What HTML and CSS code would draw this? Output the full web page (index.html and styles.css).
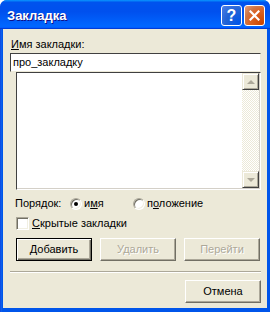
FILE: index.html
```html
<!DOCTYPE html>
<html lang="ru">
<head>
    <meta charset="UTF-8">
    <title>Закладка</title>
    <link rel="stylesheet" href="styles.css">
</head>
<body>
    <div class="window">
        <div class="titlebar">
            <span class="title">Закладка</span>
            <div class="title-buttons">
                <div class="tb-btn help">?</div>
                <div class="tb-btn close">
                    <svg width="11" height="11" viewBox="0 0 11 11">
                        <path d="M1.5 1.5 L9.5 9.5 M9.5 1.5 L1.5 9.5" stroke="#fff" stroke-width="2.2" stroke-linecap="square"/>
                    </svg>
                </div>
            </div>
        </div>
        <div class="frame">
            <div class="content">
                <div class="field-label"><u>И</u>мя закладки:</div>
                <div class="name-input">про_закладку</div>
                <div class="listbox">
                    <div class="list-items"></div>
                    <div class="scrollbar">
                        <div class="sb-btn"><span class="arrow up"></span></div>
                        <div class="sb-track"></div>
                        <div class="sb-btn"><span class="arrow down"></span></div>
                    </div>
                </div>
                <div class="order-row">
                    <span class="order-label">Порядок:</span>
                    <span class="radio-opt first"><span class="radio checked"></span><span>и<u>м</u>я</span></span>
                    <span class="radio-opt"><span class="radio"></span><span>п<u>о</u>ложение</span></span>
                </div>
                <div class="check-row"><span class="checkbox"></span><span><u>С</u>крытые закладки</span></div>
                <div class="button-row">
                    <div class="btn default"><span><u>Д</u>обавить</span></div>
                    <div class="btn disabled">Удалить</div>
                    <div class="btn disabled">Перейти</div>
                </div>
                <div class="separator"></div>
                <div class="footer">
                    <div class="btn">Отмена</div>
                </div>
            </div>
        </div>
    </div>
</body>
</html>
```

FILE: styles.css
```css
body {
    margin: 0;
    font-family: "Liberation Sans", Arial, sans-serif;
    font-size: 11px;
    line-height: 13px;
    color: #000;
}
.window {
    width: 270px;
    height: 312px;
    display: flex;
    flex-direction: column;
    background: #0055ea;
    border-radius: 7px 7px 0 0;
    overflow: hidden;
}
.titlebar {
    height: 29px;
    flex: none;
    display: flex;
    align-items: center;
    justify-content: space-between;
    padding: 0 5px 0 7px;
    box-sizing: border-box;
    background: linear-gradient(180deg, #0997ff, #0053ee 8%, #0050ee 40%, #0066ff 88%, #0066ff 93%, #005bff 95%, #003dd7 96%, #003dd7);
}
.title {
    color: #fff;
    font-size: 13px;
    font-weight: bold;
    text-shadow: 1px 1px #0f1089;
    padding-top: 2px;
}
.title-buttons {
    display: flex;
    gap: 2px;
    padding-top: 2px;
}
.tb-btn {
    width: 21px;
    height: 21px;
    box-sizing: border-box;
    border: 1px solid #fff;
    border-radius: 3px;
    display: flex;
    align-items: center;
    justify-content: center;
    color: #fff;
}
.help {
    background: radial-gradient(circle at 90% 90%, #0054e9 0%, #2263d5 55%, #4479e4 90%, #5b8ae8 100%);
    font-size: 16px;
    font-weight: bold;
}
.close {
    background: radial-gradient(circle at 90% 90%, #cc4600 0%, #dc6527 55%, #cd7546 70%, #e8a07a 100%);
}
.frame {
    flex: 1;
    padding: 0 3px 4px 3px;
    display: flex;
    background: linear-gradient(90deg, #0831d9 0, #166aee 1px, #0055ea 2px);
}
.content {
    flex: 1;
    background: #ece9d8;
    padding: 9px 6px 0 7px;
    display: flex;
    flex-direction: column;
}
.field-label {
    padding-left: 1px;
}
.name-input {
    margin-top: 2px;
    height: 19px;
    box-sizing: border-box;
    background: #fff;
    border-top: 1px solid #404040;
    border-left: 1px solid #404040;
    border-right: 1px solid #ece9d8;
    border-bottom: 1px solid #ece9d8;
    padding: 2px 0 0 2px;
}
.listbox {
    margin: 0 0 0 6px;
    height: 118px;
    box-sizing: border-box;
    display: flex;
    background: #fff;
    border-top: 1px solid #404040;
    border-left: 1px solid #404040;
    border-right: 1px solid #fff;
    border-bottom: 1px solid #fff;
    box-shadow: inset -1px -1px #d4d0c8;
}
.list-items {
    flex: 1;
}
.scrollbar {
    width: 17px;
    display: flex;
    flex-direction: column;
    margin: 0 1px 1px 0;
}
.sb-btn {
    height: 17px;
    box-sizing: border-box;
    background: #ece9d8;
    border-top: 1px solid #ece9d8;
    border-left: 1px solid #ece9d8;
    border-right: 1px solid #404040;
    border-bottom: 1px solid #404040;
    box-shadow: inset 1px 1px #fff, inset -1px -1px #aca899;
    display: flex;
    align-items: center;
    justify-content: center;
}
.arrow {
    width: 0;
    height: 0;
    border-left: 4px solid transparent;
    border-right: 4px solid transparent;
}
.arrow.up {
    border-bottom: 4px solid #aca899;
}
.arrow.down {
    border-top: 4px solid #aca899;
}
.sb-track {
    flex: 1;
    background: repeating-conic-gradient(#fff 0 25%, #ece9d8 0 50%) 0 0 / 2px 2px;
}
.order-row {
    margin-top: 7px;
    display: flex;
    align-items: center;
    padding-left: 5px;
}
.order-label {
    width: 55px;
}
.radio-opt {
    display: flex;
    align-items: center;
    gap: 2px;
}
.radio-opt.first {
    width: 63px;
}
.radio {
    width: 12px;
    height: 12px;
    box-sizing: border-box;
    border-radius: 50%;
    background: #fff;
    border: 1px solid;
    border-color: #aca899 #fff #fff #aca899;
    box-shadow: inset 1px 1px #716f64, inset -1px -1px #f1efe2;
    display: flex;
    align-items: center;
    justify-content: center;
}
.radio.checked::after {
    content: "";
    width: 4px;
    height: 4px;
    border-radius: 50%;
    background: #000;
}
.check-row {
    margin-top: 7px;
    display: flex;
    align-items: center;
    gap: 3px;
    padding-left: 6px;
}
.checkbox {
    width: 13px;
    height: 13px;
    box-sizing: border-box;
    background: #fff;
    border: 1px solid;
    border-color: #aca899 #fff #fff #aca899;
    box-shadow: inset 1px 1px #716f64, inset -1px -1px #f1efe2;
}
.button-row {
    margin-top: 8px;
    display: flex;
    gap: 8px;
    padding-left: 6px;
}
.btn {
    width: 76px;
    height: 23px;
    box-sizing: border-box;
    background: #ece9d8;
    border-top: 1px solid #fff;
    border-left: 1px solid #fff;
    border-right: 1px solid #716f64;
    border-bottom: 1px solid #716f64;
    box-shadow: inset -1px -1px #aca899;
    display: flex;
    align-items: center;
    justify-content: center;
}
.btn.default {
    border: 1px solid #000;
    box-shadow: inset 1px 1px #fff, inset -1px -1px #716f64, inset -2px -2px #aca899;
}
.btn.disabled {
    color: #aca899;
    text-shadow: 1px 1px #fff;
}
.separator {
    margin-top: 10px;
    height: 1px;
    background: #aca899;
    border-bottom: 1px solid #fff;
}
.footer {
    margin-top: 7px;
    display: flex;
    justify-content: flex-end;
}
```
